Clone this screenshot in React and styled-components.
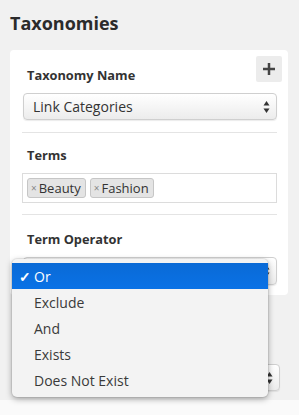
import React from 'react'
import styled, { createGlobalStyle } from 'styled-components'

const GlobalStyle = createGlobalStyle`
  html, body {
    margin: 0;
    padding: 0;
    background: #f1f1f1;
  }
  body {
    font-family: "Open Sans", "Liberation Sans", sans-serif;
    color: #333;
  }
`

const Page = styled.div`
  position: relative;
  width: 299px;
  height: 415px;
  overflow: hidden;
  background: linear-gradient(#f1f1f1 0, #f1f1f1 400px, #fafafa 400px);
`

const Section = styled.div`
  padding: 10px 11px 0 10px;
`

const Title = styled.h2`
  margin: 0;
  padding-top: 1px;
  font-size: 18px;
  font-weight: 700;
  line-height: 24px;
  color: #2b2b2b;
`

const Card = styled.div`
  margin-top: 15px;
  background: #fff;
  border-radius: 4px;
  padding: 6px 11px 10px 12px;
`

const HeaderRow = styled.div`
  display: flex;
  align-items: flex-start;
  justify-content: space-between;
`

const Label = styled.div`
  padding-left: 5px;
  padding-top: ${p => p.$top || 0}px;
  font-size: 12.8px;
  font-weight: 700;
  line-height: 16px;
  color: #333;
`

const AddButton = styled.button`
  width: 26px;
  height: 26px;
  margin-right: -5px;
  padding: 0;
  border: none;
  border-radius: 2px;
  background: #ececec;
  display: flex;
  align-items: center;
  justify-content: center;
`

const Select = styled.div`
  position: relative;
  box-sizing: border-box;
  height: ${p => p.$h || 27}px;
  margin-top: ${p => p.$mt || 0}px;
  margin-left: ${p => p.$ml ?? 1}px;
  padding-left: 9px;
  border: 1px solid #cfcfcf;
  border-radius: 4px;
  background: linear-gradient(#ffffff, #ececec);
  box-shadow: 0 1px 1px rgba(0, 0, 0, 0.08);
  display: flex;
  align-items: center;
  font-size: 14px;
  color: #333;
`

const Arrows = styled.svg`
  position: absolute;
  right: 6px;
  top: 50%;
  margin-top: -7px;
`

const Divider = styled.div`
  height: 1px;
  background: #e4e4e4;
  margin: ${p => p.$m || '12px 0 0'};
`

const TermsBox = styled.div`
  box-sizing: border-box;
  height: 30px;
  margin-top: 10px;
  border: 1px solid #dcdcdc;
  display: flex;
  align-items: center;
  gap: 4px;
  padding-left: 4px;
`

const Tag = styled.span`
  box-sizing: border-box;
  height: 20px;
  padding: 0 4px 0 3px;
  border: 1px solid #c6c6c6;
  border-radius: 3px;
  background: #e4e4e4;
  display: flex;
  align-items: center;
  font-size: 13px;
  color: #333;
`

const TagX = styled.span`
  font-size: 10px;
  color: #888;
  margin-right: 2px;
`

const Menu = styled.div`
  position: absolute;
  left: 12px;
  top: 259px;
  width: 256px;
  box-sizing: border-box;
  padding: 4px 0 4px;
  border-radius: 5px;
  background: #f3f3f3;
  box-shadow: 0 2px 6px rgba(0, 0, 0, 0.35), 0 0 0 1px rgba(0, 0, 0, 0.06);
`

const Option = styled.div`
  height: 26px;
  display: flex;
  align-items: center;
  font-size: 14px;
  color: ${p => (p.$selected ? '#fff' : '#3a3a3a')};
  background: ${p => (p.$selected ? 'linear-gradient(#0a6ad6, #0a72e6)' : 'transparent')};
`

const Check = styled.span`
  width: 15px;
  padding-left: 7px;
  font-size: 14px;
  font-weight: 700;
`

const Lower = styled.div`
  padding: 69px 19px 0 12px;
`

const UpDown = () => (
  <Arrows width="7" height="14" viewBox="0 0 7 14">
    <path d="M3.5 1 L6.5 5.5 L0.5 5.5 Z" fill="#333" />
    <path d="M3.5 13 L6.5 8.5 L0.5 8.5 Z" fill="#333" />
  </Arrows>
)

const options = ['Or', 'Exclude', 'And', 'Exists', 'Does Not Exist']

export default function App() {
  return (
    <Page>
      <GlobalStyle />
      <Section>
        <Title>Taxonomies</Title>
        <Card>
          <HeaderRow>
            <Label $top={11}>Taxonomy Name</Label>
            <AddButton>
              <svg width="12" height="12" viewBox="0 0 12 12">
                <rect x="4.75" y="0" width="2.5" height="12" fill="#444" />
                <rect x="0" y="4.75" width="12" height="2.5" fill="#444" />
              </svg>
            </AddButton>
          </HeaderRow>
          <Select $mt={10}>
            Link Categories
            <UpDown />
          </Select>
          <Divider />
          <Label $top={14}>Terms</Label>
          <TermsBox>
            <Tag><TagX>×</TagX>Beauty</Tag>
            <Tag><TagX>×</TagX>Fashion</Tag>
          </TermsBox>
          <Divider $m="11px 0 0" />
          <Label $top={16}>Term Operator</Label>
          <Select $mt={10} $h={28}>
            <UpDown />
          </Select>
        </Card>
      </Section>
      <Lower>
        <Select $ml={0}>
          <UpDown />
        </Select>
      </Lower>
      <Menu>
        {options.map((o, i) => (
          <Option key={o} $selected={i === 0}>
            <Check>{i === 0 ? '✓' : ''}</Check>
            {o}
          </Option>
        ))}
      </Menu>
    </Page>
  )
}
